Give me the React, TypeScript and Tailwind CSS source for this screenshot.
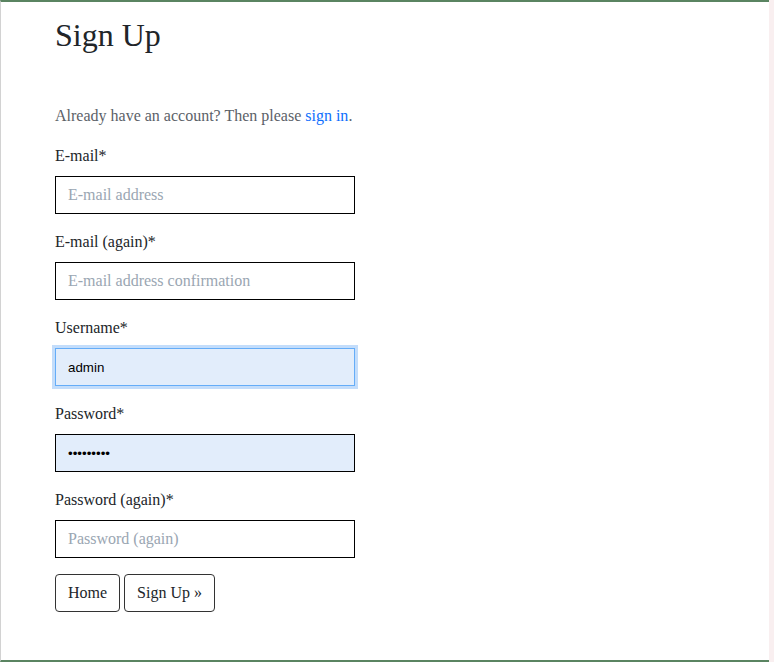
const fields = [
  { label: 'E-mail*', placeholder: 'E-mail address', type: 'email' },
  { label: 'E-mail (again)*', placeholder: 'E-mail address confirmation', type: 'email' },
  { label: 'Username*', placeholder: 'Username', type: 'text', value: 'admin', focused: true },
  { label: 'Password*', placeholder: 'Password', type: 'password', value: '123456789' },
  { label: 'Password (again)*', placeholder: 'Password (again)', type: 'password' },
];

export default function App() {
  return (
    <div className="flex h-[662px] w-full bg-[#f9eff0] font-['Liberation_Serif',serif] text-[#212529]">
      <div className="h-[662px] w-[769px] shrink-0 border-y-2 border-l border-y-[#5a8461] border-l-[#d2d2d2] bg-white pl-[54px] pt-[14px]">
        <h1 className="text-[32px] font-normal leading-[1.2]">Sign Up</h1>

        <p className="mt-[50px] text-base leading-6 text-[#5b6168]">
          Already have an account? Then please{' '}
          <a href="#" className="text-[#0d6efd]">
            sign in
          </a>
          .
        </p>

        <form className="mt-4" onSubmit={(e) => e.preventDefault()}>
          {fields.map((field) => (
            <div key={field.label} className="mb-4">
              <label className="block text-base leading-6">{field.label}</label>
              <input
                type={field.type}
                placeholder={field.placeholder}
                defaultValue={field.value}
                className={
                  field.value
                    ? field.focused
                      ? "mt-2 block h-[38px] w-[300px] border border-[#65adf8] bg-[#e2edfb] px-3 font-['Liberation_Sans',sans-serif] text-[13.33px] text-black shadow-[0_0_0_3px_#c3ddfb] outline-none"
                      : "mt-2 block h-[38px] w-[300px] border border-black bg-[#e2edfb] px-3 font-['Liberation_Sans',sans-serif] text-[13.33px] text-black outline-none"
                    : "mt-2 block h-[38px] w-[300px] border border-black bg-white px-3 text-base text-black outline-none placeholder:text-[#9aa6b2]"
                }
              />
            </div>
          ))}

          <div className="flex gap-1">
            <button
              type="button"
              className="h-[38px] rounded border border-[#333] bg-white px-3 text-base leading-6 text-[#212529]"
            >
              Home
            </button>
            <button
              type="submit"
              className="h-[38px] rounded border border-[#333] bg-white px-3 text-base leading-6 text-[#212529]"
            >
              Sign Up »
            </button>
          </div>
        </form>
      </div>
    </div>
  );
}
